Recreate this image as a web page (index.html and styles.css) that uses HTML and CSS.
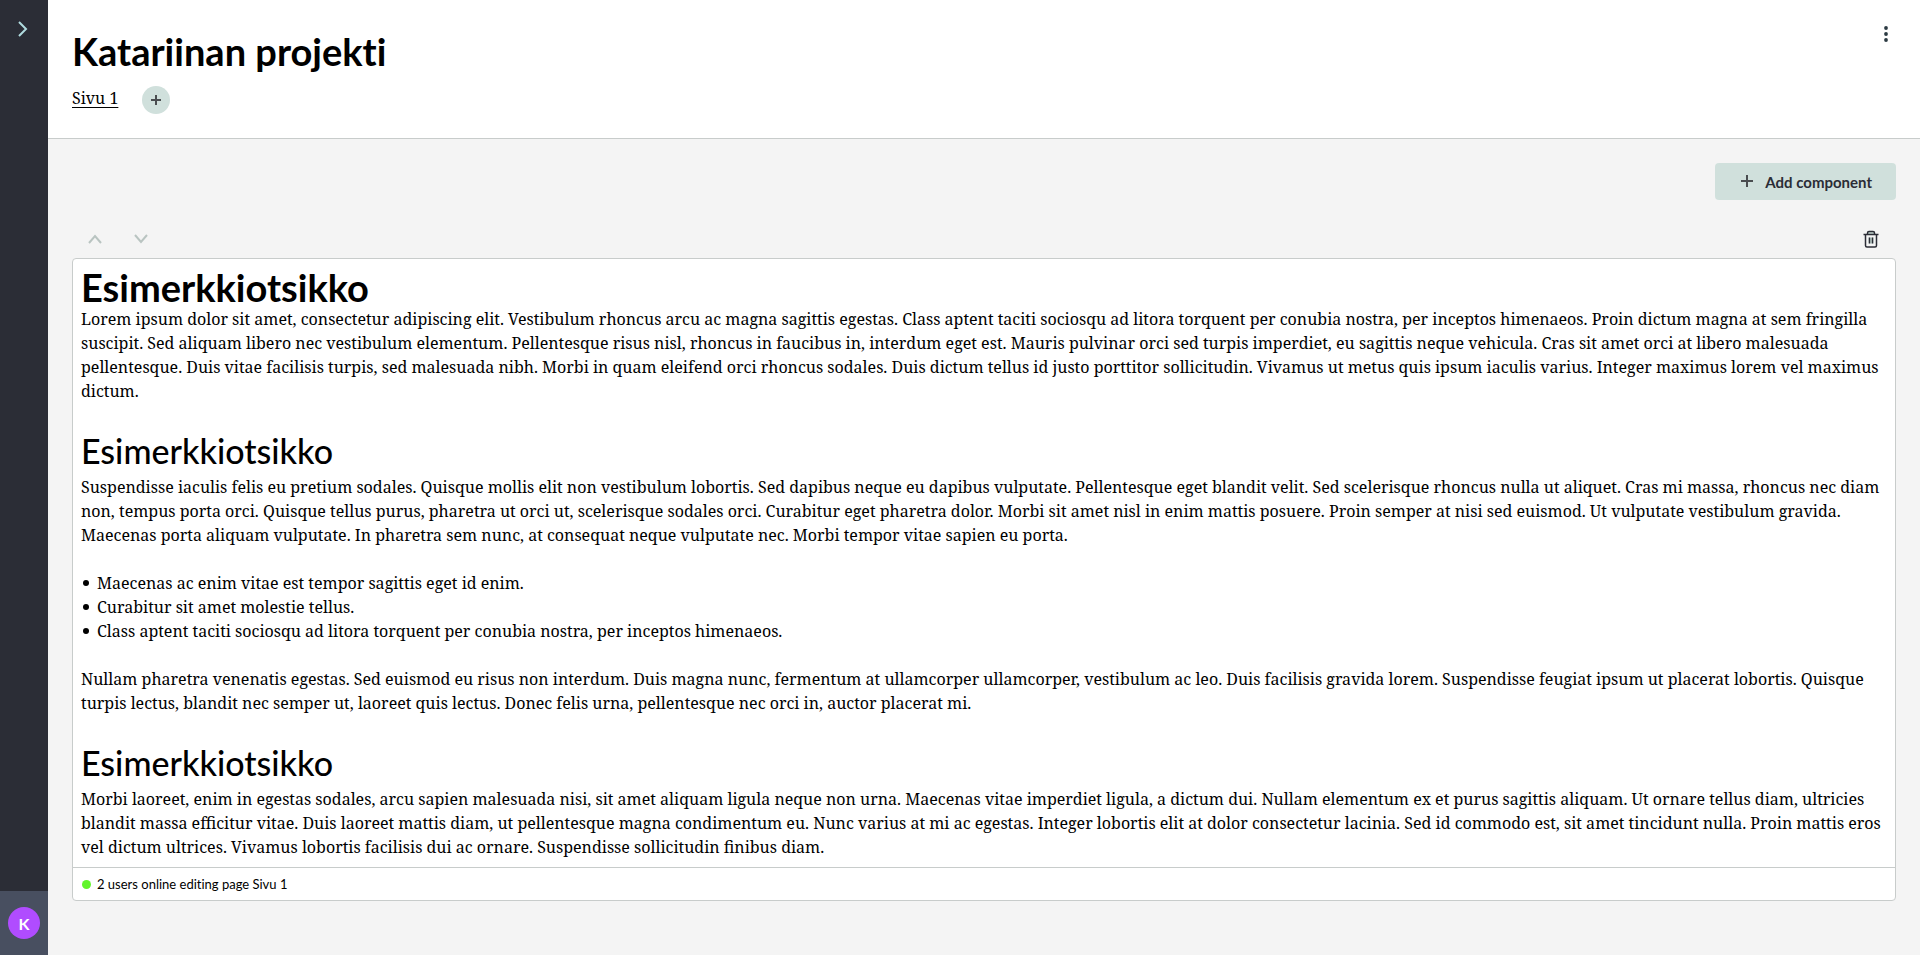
FILE: index.html
```html
<!DOCTYPE html>
<html lang="fi">
<head>
    <title>Katariinan projekti</title>
    <meta charset="utf-8" />
    <link rel="stylesheet" href="styles.css">
</head>
<body>
    <aside id="sidebar">
        <button class="icon-button expand" aria-label="Expand">
            <svg width="24" height="24" viewBox="0 0 24 24"><path d="M7 6L14 13L7 20" /></svg>
        </button>
        <div class="user">
            <button class="avatar">K</button>
        </div>
    </aside>
    <div id="wrapper">
        <header id="header">
            <div>
                <h1>Katariinan projekti</h1>
                <nav class="pages">
                    <a href="#">Sivu 1</a>
                    <button class="add-page" aria-label="Add page">
                        <svg width="14" height="14" viewBox="0 0 14 14"><path d="M7 2v10M2 7h10" /></svg>
                    </button>
                </nav>
            </div>
            <button class="icon-button menu" aria-label="Menu">
                <svg width="24" height="24" viewBox="0 0 24 24"><circle cx="12" cy="6" r="1.900" /><circle cx="12" cy="12" r="1.900" /><circle cx="12" cy="18" r="1.900" /></svg>
            </button>
        </header>
        <main>
            <div class="actions">
                <button class="add-component">
                    <svg width="12" height="14" viewBox="0 0 12 14"><path d="M6 0v12M0 6h12" /></svg>
                    Add component
                </button>
            </div>
            <div class="toolbar">
                <button class="icon-button arrow" aria-label="Move up">
                    <svg width="24" height="24" viewBox="0 0 24 24"><path d="M6 16l6-7 6 7" /></svg>
                </button>
                <button class="icon-button arrow" aria-label="Move down">
                    <svg width="24" height="24" viewBox="0 0 24 24"><path d="M6 8l6 7 6-7" /></svg>
                </button>
                <button class="icon-button trash" aria-label="Delete">
                    <svg width="24" height="24" viewBox="0 0 24 24">
                        <path class="tint" d="M8.500 7.500V6q0-1.500 1.500-1.500h4q1.500 0 1.500 1.500v1.500zM9.500 10.500h5v6h-5z" />
                        <path d="M4.500 7.500h15M6.500 7.500v11q0 1.500 1.500 1.500h8q1.500 0 1.500-1.500v-11M8.500 7V6q0-1.500 1.500-1.500h4q1.500 0 1.500 1.500v1M10.500 10.500v6M13.500 10.500v6" />
                    </svg>
                </button>
            </div>
            <section class="card">
                <article class="content">
                    <h1>Esimerkkiotsikko</h1>
                    <p>Lorem ipsum dolor sit amet, consectetur adipiscing elit. Vestibulum rhoncus arcu ac magna sagittis egestas. Class aptent taciti sociosqu ad litora torquent per conubia nostra, per inceptos himenaeos. Proin dictum magna at sem fringilla suscipit. Sed aliquam libero nec vestibulum elementum. Pellentesque risus nisl, rhoncus in faucibus in, interdum eget est. Mauris pulvinar orci sed turpis imperdiet, eu sagittis neque vehicula. Cras sit amet orci at libero malesuada pellentesque. Duis vitae facilisis turpis, sed malesuada nibh. Morbi in quam eleifend orci rhoncus sodales. Duis dictum tellus id justo porttitor sollicitudin. Vivamus ut metus quis ipsum iaculis varius. Integer maximus lorem vel maximus dictum.</p>
                    <h2>Esimerkkiotsikko</h2>
                    <p>Suspendisse iaculis felis eu pretium sodales. Quisque mollis elit non vestibulum lobortis. Sed dapibus neque eu dapibus vulputate. Pellentesque eget blandit velit. Sed scelerisque rhoncus nulla ut aliquet. Cras mi massa, rhoncus nec diam non, tempus porta orci. Quisque tellus purus, pharetra ut orci ut, scelerisque sodales orci. Curabitur eget pharetra dolor. Morbi sit amet nisl in enim mattis posuere. Proin semper at nisi sed euismod. Ut vulputate vestibulum gravida. Maecenas porta aliquam vulputate. In pharetra sem nunc, at consequat neque vulputate nec. Morbi tempor vitae sapien eu porta.</p>
                    <ul>
                        <li>Maecenas ac enim vitae est tempor sagittis eget id enim.</li>
                        <li>Curabitur sit amet molestie tellus.</li>
                        <li>Class aptent taciti sociosqu ad litora torquent per conubia nostra, per inceptos himenaeos.</li>
                    </ul>
                    <p>Nullam pharetra venenatis egestas. Sed euismod eu risus non interdum. Duis magna nunc, fermentum at ullamcorper ullamcorper, vestibulum ac leo. Duis facilisis gravida lorem. Suspendisse feugiat ipsum ut placerat lobortis. Quisque turpis lectus, blandit nec semper ut, laoreet quis lectus. Donec felis urna, pellentesque nec orci in, auctor placerat mi.</p>
                    <h2>Esimerkkiotsikko</h2>
                    <p>Morbi laoreet, enim in egestas sodales, arcu sapien malesuada nisi, sit amet aliquam ligula neque non urna. Maecenas vitae imperdiet ligula, a dictum dui. Nullam elementum ex et purus sagittis aliquam. Ut ornare tellus diam, ultricies blandit massa efficitur vitae. Duis laoreet mattis diam, ut pellentesque magna condimentum eu. Nunc varius at mi ac egestas. Integer lobortis elit at dolor consectetur lacinia. Sed id commodo est, sit amet tincidunt nulla. Proin mattis eros vel dictum ultrices. Vivamus lobortis facilisis dui ac ornare. Suspendisse sollicitudin finibus diam.</p>
                </article>
                <footer class="status"><span class="dot"></span>2 users online editing page Sivu 1</footer>
            </section>
        </main>
    </div>
</body>
</html>
```
FILE: styles.css
```css
* { box-sizing: border-box; }
body { margin: 0; min-height: 100vh; display: flex; background-color: #f4f4f4; color: #000; font: 16px/24px "Noto Serif", "Droid Serif", "Liberation Serif", serif; }
h1, h2, p, ul { margin: 0; padding: 0; }
h1, h2, button, .status { font-family: Lato, sans-serif; font-variant-ligatures: none; }
h1 { font-size: 38px; line-height: 40px; font-weight: 700; }
h2 { font-size: 34px; line-height: 48px; font-weight: 500; }
button { border: 0; padding: 0; cursor: pointer; }
svg { display: block; fill: none; stroke: currentColor; stroke-width: 2; }

#sidebar { width: 48px; flex: none; display: flex; flex-direction: column; justify-content: space-between; align-items: center; padding-top: 16px; background-color: #2b2d36; }
.icon-button { background: none; width: 24px; height: 24px; }
.expand { color: #b0dbdf; }
.user { width: 48px; height: 64px; padding: 16px 8px; background-color: #484f60; }
.avatar { width: 32px; height: 32px; border-radius: 50%; background-color: #b04cff; color: #fff; font-size: 16px; font-weight: 700; }

#wrapper { flex: 1; min-width: 0; }
#header { display: flex; justify-content: space-between; align-items: flex-start; padding: 31px 24px 24px; background-color: #fff; border-bottom: 1px solid #c8cccb; }
.pages { display: flex; align-items: flex-start; gap: 24px; padding-top: 15px; }
.pages a { color: #000; text-underline-offset: 3px; }
.add-page { display: flex; align-items: center; justify-content: center; width: 28px; height: 28px; border-radius: 50%; background-color: #d0e0dc; color: #4a4d50; }
.menu { margin: -9px -2px 0 0; color: #2b3a42; }
.menu svg { fill: currentColor; stroke: none; }

main { padding: 24px; }
.actions { display: flex; justify-content: flex-end; }
.add-component { display: flex; align-items: center; gap: 12px; height: 37px; padding: 0 24px 0 26px; border-radius: 4px; background-color: #d0e0dc; color: #2b2d36; font-size: 15px; font-weight: 700; }
.add-component svg { color: #4a4d50; }
.toolbar { display: flex; gap: 22px; padding: 27px 13px 7px 11px; }
.arrow { color: #b9c4c1; }
.trash { margin-left: auto; color: #2b2d36; }
.trash svg { stroke-width: 1.5; }
.trash .tint { fill: #c4d6d1; stroke: none; }

.card { background-color: #fff; border: 1px solid #c8cccb; border-radius: 4px; }
.content { padding: 8px; }
.content p, .content ul { margin-bottom: 24px; }
.content p:last-child { margin-bottom: 0; }
.content ul { list-style: none; }
.content li { display: flex; align-items: center; gap: 8px; }
.content li::before { content: ""; width: 6px; height: 6px; margin-left: 2px; border-radius: 50%; background-color: #000; }
.status { display: flex; align-items: center; gap: 6px; height: 33px; padding-left: 9px; border-top: 1px solid #c8cccb; font-size: 13px; }
.dot { width: 9px; height: 9px; border-radius: 50%; background-color: #62f52b; }
```
